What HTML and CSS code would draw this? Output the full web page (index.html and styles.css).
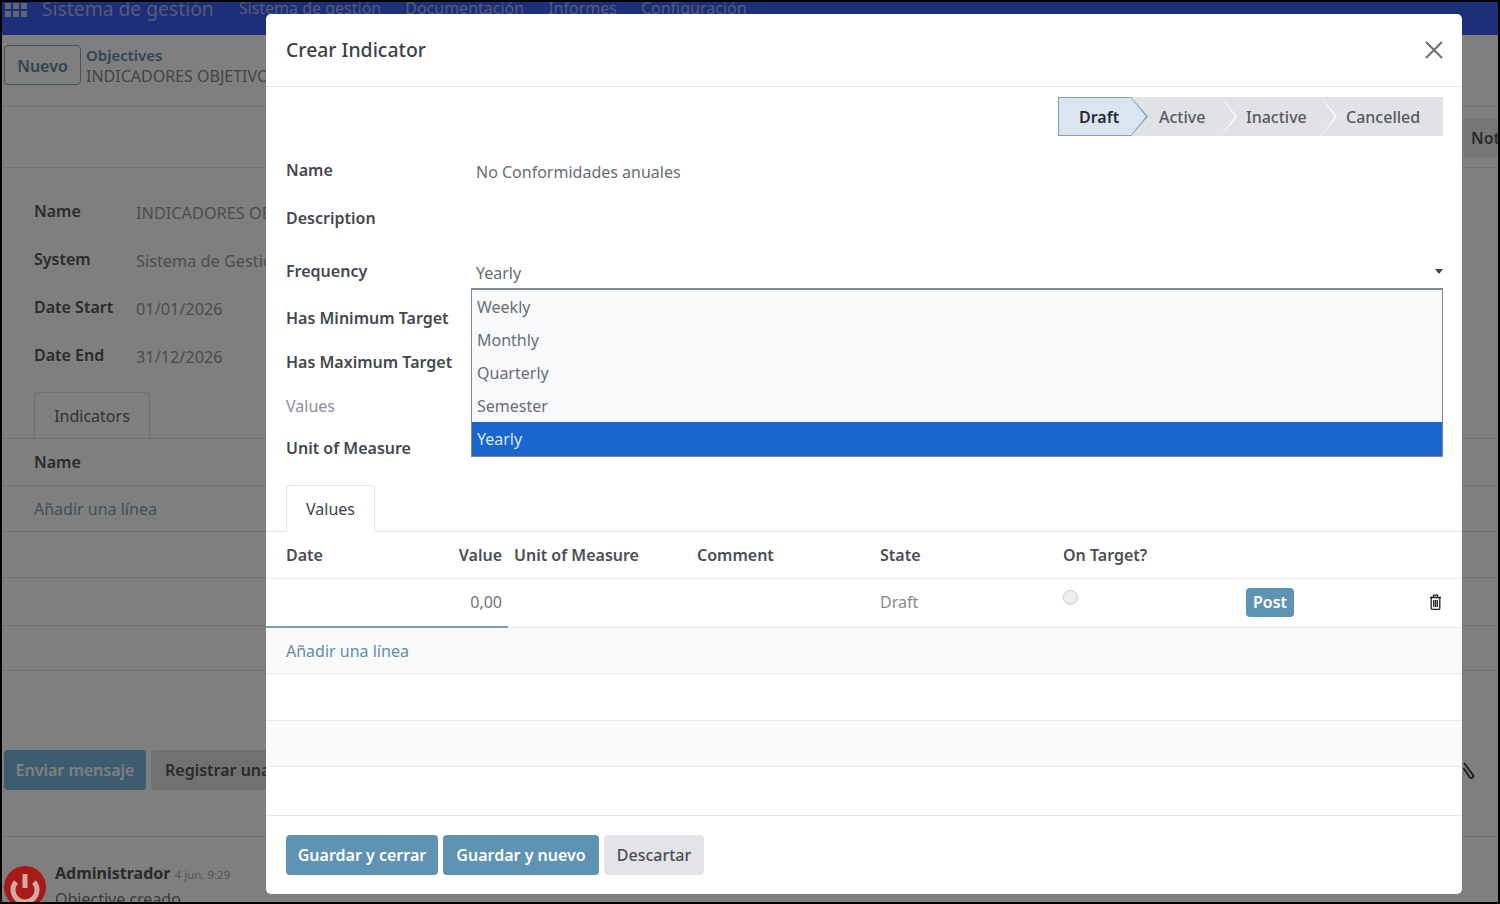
FILE: index.html
```html
<!DOCTYPE html>
<html lang="es">
<head>
  <meta charset="UTF-8">
  <title>Crear Indicator</title>
  <link rel="stylesheet" href="styles.css">
</head>
<body>
<div class="screen">

  <!-- page behind the dialog -->
  <nav class="navbar">
    <svg class="apps" width="22" height="15" viewBox="0 0 22 15"><g fill="#c3cdea"><rect x="0" y="0" width="6" height="6"/><rect x="8" y="0" width="6" height="6"/><rect x="16" y="0" width="6" height="6"/><rect x="0" y="8" width="6" height="6"/><rect x="8" y="8" width="6" height="6"/><rect x="16" y="8" width="6" height="6"/></g></svg>
    <span class="brand">Sistema de gestión</span>
    <a>Sistema de gestión</a>
    <a>Documentación</a>
    <a>Informes</a>
    <a>Configuración</a>
  </nav>

  <div class="control-panel">
    <button class="btn-new">Nuevo</button>
    <div class="crumbs">
      <a>Objectives</a>
      <span>INDICADORES OBJETIVOS</span>
    </div>
  </div>

  <div class="status-strip"><span class="side-tab">Notas</span></div>

  <div class="bg-form">
    <div class="bg-field"><b>Name</b><span>INDICADORES OBJETIVOS</span></div>
    <div class="bg-field"><b>System</b><span>Sistema de Gestión</span></div>
    <div class="bg-field"><b>Date Start</b><span>01/01/2026</span></div>
    <div class="bg-field"><b>Date End</b><span>31/12/2026</span></div>
  </div>

  <div class="bg-tabs"><span class="bg-tab">Indicators</span></div>
  <div class="bg-row bg-head"><b>Name</b></div>
  <div class="bg-row"><a>Añadir una línea</a></div>
  <div class="bg-row"></div>
  <div class="bg-row bg-tall"></div>
  <div class="bg-row bg-short"></div>

  <div class="chatter-bar">
    <button class="btn-send">Enviar mensaje</button>
    <button class="btn-log">Registrar una nota</button>
    <svg class="clip" width="16" height="20" viewBox="0 0 16 20"><path d="M2 3l9 12c1.500 2.500-2 4-3.500 2L1.500 8" fill="none" stroke="#3c3c3c" stroke-width="2"/></svg>
  </div>

  <div class="message">
    <svg class="avatar" width="42" height="42" viewBox="0 0 42 42">
      <circle cx="21" cy="21" r="21" fill="#a81a18"/>
      <path d="M12 16a12 12 0 1 0 18 0" fill="none" stroke="#d8a8a4" stroke-width="5"/>
      <rect x="18.500" y="8" width="5" height="14" fill="#d8a8a4"/>
    </svg>
    <div class="msg-body">
      <div class="author">Administrador <small>4 jun. 9:29</small></div>
      <div class="msg-text">Objective creado</div>
    </div>
  </div>

  <div class="backdrop"></div>

  <!-- dialog -->
  <div class="modal">
    <header class="modal-head">
      <h4>Crear Indicator</h4>
      <svg class="close" width="18" height="18" viewBox="0 0 18 18"><path d="M1 1l16 16M17 1L1 17" stroke="#6b6f75" stroke-width="2" fill="none"/></svg>
    </header>

    <div class="modal-body">
      <div class="statusbar">
        <span class="step current">Draft</span>
        <span class="step step-active">Active</span>
        <span class="step step-inactive">Inactive</span>
        <span class="step step-cancelled">Cancelled</span>
      </div>

      <div class="form-grid">
        <label>Name</label><div class="val val-name">No Conformidades anuales</div>
        <label>Description</label><div class="val"></div>
        <label class="label-freq">Frequency</label>
        <div class="val val-select">Yearly<i class="caret"></i></div>
        <label>Has Minimum Target</label><div class="val"></div>
        <label>Has Maximum Target</label><div class="val"></div>
        <label class="muted">Values</label><div class="val"></div>
        <label>Unit of Measure</label><div class="val"></div>

        <ul class="dropdown">
          <li>Weekly</li>
          <li>Monthly</li>
          <li>Quarterly</li>
          <li>Semester</li>
          <li class="selected">Yearly</li>
        </ul>
      </div>

      <div class="tabs"><span class="tab">Values</span></div>

      <div class="line-row line-head">
        <span>Date</span>
        <span class="num">Value</span>
        <span>Unit of Measure</span>
        <span>Comment</span>
        <span>State</span>
        <span>On Target?</span>
      </div>
      <div class="line-row line-data">
        <span></span>
        <span class="num">0,00</span>
        <span></span>
        <span></span>
        <span class="state">Draft</span>
        <span><i class="radio"></i></span>
        <span><button class="btn-post">Post</button></span>
        <svg class="trash" width="13" height="16" viewBox="0 0 13 16"><path d="M1 3.500h11M4.500 3V1.200h4V3M2.200 3.500v10.800c0 .6.400 1 1 1h6.600c.6 0 1-.4 1-1V3.500M4.700 6v7M6.500 6v7M8.300 6v7" fill="none" stroke="#222" stroke-width="1.300"/></svg>
      </div>
      <div class="line-row line-add"><a>Añadir una línea</a></div>
      <div class="line-row line-plain"></div>
      <div class="line-row line-striped"></div>
      <div class="line-row line-last"></div>
    </div>

    <footer class="modal-foot">
      <button class="btn-primary btn-close">Guardar y cerrar</button>
      <button class="btn-primary btn-more">Guardar y nuevo</button>
      <button class="btn-discard">Descartar</button>
    </footer>
  </div>

</div>
</body>
</html>
```

FILE: styles.css
```css
* {
  box-sizing: border-box;
}

body {
  margin: 0;
  background: #000;
  font-family: "Noto Sans", "Open Sans", sans-serif;
  font-size: 16px;
  color: #4a4f55;
}

button {
  font-family: inherit;
  font-size: inherit;
  border: none;
}

.screen {
  position: relative;
  width: 1496px;
  height: 900px;
  margin: 2px;
  overflow: hidden;
  background: #fff;
}

/* ---- page behind ---- */
.navbar {
  height: 33px;
  background: #3a5ef5;
  color: #a9b8f0;
  display: flex;
  align-items: flex-start;
  overflow: hidden;
  padding-left: 3px;
}
.navbar .apps {
  margin-top: 1px;
  flex: none;
}
.navbar .brand {
  font-size: 19.300px;
  line-height: 14px;
  margin-left: 15px;
  margin-right: 25px;
}
.navbar a {
  font-size: 16px;
  line-height: 12px;
  margin-right: 24px;
}

.control-panel {
  height: 72px;
  padding: 10px 0 0 2px;
  display: flex;
  gap: 5px;
  border-bottom: 1px solid #e3e3e3;
}
.btn-new {
  width: 77px;
  height: 40px;
  padding-top: 2px;
  background: #fff;
  border: 1px solid #85a9b8;
  border-radius: 4px;
  color: #5f8a9c;
  font-weight: 600;
}
.crumbs {
  display: flex;
  flex-direction: column;
  line-height: 20px;
  white-space: nowrap;
}
.crumbs a {
  color: #5e8ca2;
  font-weight: 600;
  font-size: 15px;
}
.crumbs span {
  width: 180px;
  padding-top: 1px;
  overflow: hidden;
  color: #888;
}

.status-strip {
  height: 61px;
  border-bottom: 1px solid #e3e3e3;
  padding-top: 11px;
  display: flex;
  justify-content: flex-end;
}
.side-tab {
  width: 35px;
  height: 39px;
  line-height: 40px;
  padding-left: 8px;
  overflow: hidden;
  background: #ececec;
  color: #555;
  font-weight: 600;
}

.bg-form {
  padding: 19px 0 0 32px;
}
.bg-field {
  height: 48px;
  display: flex;
  align-items: center;
  white-space: nowrap;
}
.bg-field b {
  width: 102px;
  font-weight: 600;
  color: #555;
}
.bg-field span {
  width: 130px;
  padding-top: 3px;
  overflow: hidden;
  font-size: 16.300px;
  color: #999;
}

.bg-tabs {
  height: 47px;
  margin-top: 13px;
  padding-left: 32px;
  border-bottom: 1px solid #e3e3e3;
}
.bg-tab {
  display: block;
  width: 116px;
  height: 47px;
  line-height: 46px;
  text-align: center;
  border: 1px solid #e3e3e3;
  border-bottom: none;
  border-radius: 4px 4px 0 0;
  color: #666;
}
.bg-row {
  height: 46px;
  padding-left: 32px;
  line-height: 46px;
  border-bottom: 1px solid #e3e3e3;
}
.bg-head {
  height: 47px;
}
.bg-tall {
  height: 48px;
}
.bg-short {
  height: 45px;
}
.bg-row b {
  font-weight: 600;
  color: #555;
}
.bg-row a {
  color: #7f9fb4;
}

.chatter-bar {
  height: 166px;
  padding: 79px 0 0 2px;
  display: flex;
  align-items: flex-start;
  gap: 5px;
  border-bottom: 1px solid #e3e3e3;
}
.btn-send {
  width: 142px;
  height: 40px;
  background: #7ab8e0;
  color: #fff;
  font-weight: 600;
  border-radius: 4px;
}
.btn-log {
  width: 160px;
  height: 40px;
  padding: 0 0 0 14px;
  text-align: left;
  background: #e2e2e2;
  color: #555;
  font-weight: 600;
  border-radius: 4px;
  white-space: nowrap;
  overflow: hidden;
}
.clip {
  margin-left: auto;
  margin-right: 20px;
  margin-top: 10px;
}

.message {
  padding: 29px 0 0 2px;
  display: flex;
  gap: 9px;
}
.avatar {
  flex: none;
  position: relative;
  z-index: 1;
}
.msg-body {
  margin-top: -3px;
}
.author {
  font-weight: 700;
  color: #555;
  line-height: 20px;
}
.author small {
  font-weight: 400;
  font-size: 11.500px;
  color: #aaa;
}
.msg-text {
  color: #777;
  line-height: 28px;
}

.backdrop {
  position: absolute;
  inset: 0;
  background: rgba(0, 0, 0, 0.5);
}

/* ---- dialog ---- */
.modal {
  position: absolute;
  z-index: 2;
  left: 264px;
  top: 12px;
  width: 1196px;
  height: 880px;
  background: #fff;
  border-radius: 5px;
  display: flex;
  flex-direction: column;
}
.modal-head {
  height: 73px;
  flex: none;
  display: flex;
  align-items: center;
  justify-content: space-between;
  padding: 0 19px 2px 20px;
  border-bottom: 1px solid #e7e8ea;
}
.modal-head h4 {
  margin: 0;
  font-size: 19.400px;
  font-weight: 500;
  color: #3c4046;
}
.close {
  margin-top: 2px;
}

.modal-body {
  flex: 1;
  min-height: 0;
}

.statusbar {
  display: flex;
  justify-content: flex-end;
  height: 39px;
  margin: 10px 19px 0 0;
}
.step {
  position: relative;
  height: 39px;
  line-height: 40px;
  background: #e0e2e6;
  color: #555a60;
  font-weight: 500;
}
.step::after {
  content: "";
  position: absolute;
  z-index: 2;
  top: 0;
  right: -14px;
  width: 14px;
  height: 39px;
  background: inherit;
  clip-path: polygon(0 0, 100% 50%, 0 100%);
}
.step::before {
  content: "";
  position: absolute;
  z-index: 1;
  top: 0;
  right: -16px;
  width: 16px;
  height: 39px;
  background: #fff;
  clip-path: polygon(0 0, 100% 50%, 0 100%);
}
.step.current {
  width: 73px;
  padding-left: 20px;
  background: #d9e6ef;
  color: #262a2f;
  font-weight: 600;
  border: 1px solid #7ea3b8;
  border-right: none;
  line-height: 38px;
}
.step.current::after {
  top: 0;
  right: -15px;
  width: 15px;
  height: 37px;
}
.step.current::before {
  top: -1px;
  right: -17px;
  width: 17px;
  background: #7ea3b8;
}
.step-active {
  width: 90px;
  padding-left: 28px;
}
.step-inactive {
  width: 100px;
  padding-left: 25px;
}
.step-cancelled {
  width: 122px;
  padding-left: 25px;
}
.step-cancelled::after,
.step-cancelled::before {
  display: none;
}

.form-grid {
  position: relative;
  display: grid;
  grid-template-columns: 190px 1fr;
  grid-template-rows: 48px 48px 53px 45px 44px 44px 39px;
  margin: 10px 19px 0 20px;
}
.form-grid label {
  font-weight: 600;
  color: #44484e;
  align-self: center;
  white-space: nowrap;
  font-size: 16px;
}
.form-grid label.label-freq {
  padding-top: 4px;
}
.form-grid label.muted {
  font-weight: 400;
  color: #8c9096;
}
.val {
  align-self: center;
  color: #686d73;
}
.val-name {
  padding-top: 4px;
}
.val-select {
  padding-top: 8px;
  position: relative;
}
.caret {
  position: absolute;
  right: 0;
  top: 15px;
  border-left: 4px solid transparent;
  border-right: 4px solid transparent;
  border-top: 5px solid #444;
}

.dropdown {
  position: absolute;
  left: 185px;
  right: 0;
  top: 142px;
  margin: 0;
  padding: 0;
  list-style: none;
  background: #f8f9fa;
  border: 1px solid #7d8a92;
  border-top-width: 2px;
  color: #6a6f75;
}
.dropdown li {
  height: 33px;
  line-height: 35px;
  padding-left: 5px;
}
.dropdown li.selected {
  height: 34px;
  background: #1a66d1;
  color: #d7e6fa;
}

.tabs {
  height: 47px;
  margin-top: 18px;
  padding-left: 20px;
  border-bottom: 1px solid #e3e5e8;
}
.tab {
  display: block;
  width: 89px;
  height: 47px;
  line-height: 47px;
  text-align: center;
  background: #fff;
  border: 1px solid #e3e5e8;
  border-bottom: none;
  border-radius: 4px 4px 0 0;
  color: #3f4349;
}

.line-row {
  position: relative;
  display: grid;
  grid-template-columns: 160px 68px repeat(4, 183px) 184px 1fr;
  align-items: center;
  height: 46px;
  padding-left: 20px;
  border-bottom: 1px solid #e9eaec;
}
.line-row .num {
  text-align: right;
  padding-right: 12px;
}
.line-head {
  height: 47px;
  font-weight: 600;
  color: #4a4e54;
}
.line-data {
  height: 49px;
  padding-bottom: 2px;
  color: #6f7379;
}
.line-data::after {
  content: "";
  position: absolute;
  left: 0;
  bottom: -1px;
  width: 242px;
  height: 2px;
  background: #7d9ba8;
}
.state {
  color: #85898f;
}
.radio {
  display: block;
  width: 15px;
  height: 15px;
  margin-top: -10px;
  border-radius: 50%;
  background: #eee;
  border: 1px solid #c8cacc;
}
.btn-post {
  display: block;
  width: 48px;
  height: 29px;
  padding: 0;
  border-radius: 4px;
  background: #5f93b2;
  color: #fff;
  font-weight: 600;
}
.trash {
  margin-left: -1px;
}
.line-add {
  background: #fafafa;
}
.line-add a {
  color: #5f8ea8;
  white-space: nowrap;
}
.line-plain {
  height: 47px;
}
.line-striped {
  background: #fafafa;
}
.line-last {
  height: 48px;
  border-bottom: none;
}

.modal-foot {
  flex: none;
  height: 79px;
  padding: 19px 0 0 20px;
  display: flex;
  align-items: flex-start;
  gap: 5px;
  border-top: 1px solid #e7e8ea;
}
.modal-foot button {
  height: 40px;
  border-radius: 4px;
  font-weight: 600;
  padding: 0;
}
.btn-primary {
  background: #5f93b2;
  color: #fff;
}
.btn-close {
  width: 152px;
}
.btn-more {
  width: 156px;
}
.modal-foot .btn-discard {
  width: 100px;
  background: #e2e4e8;
  color: #4a4e54;
  font-weight: 500;
}
```
